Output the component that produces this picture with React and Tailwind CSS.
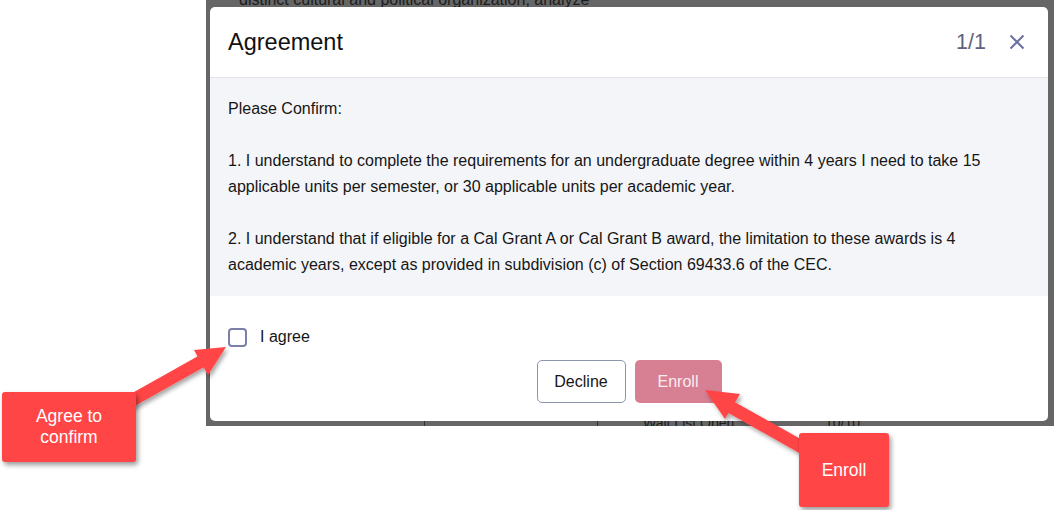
import React from "react";

const font = { fontFamily: '"Liberation Sans", Arial, sans-serif' };

const Callout = ({ className, children }) => (
  <div
    className={`absolute flex items-center justify-center text-center text-white bg-[#ff4545] rounded-[3px] shadow-[2px_3px_5px_rgba(0,0,0,0.4)] text-[17.5px] leading-[21px] ${className}`}
  >
    {children}
  </div>
);

const Arrows = () => (
  <svg
    className="absolute left-0 top-0 pointer-events-none"
    width="1054"
    height="510"
    viewBox="0 0 1054 510"
  >
    <defs>
      <filter id="sh" x="-20%" y="-20%" width="140%" height="140%">
        <feDropShadow dx="2" dy="3" stdDeviation="2" floodColor="#000" floodOpacity="0.35" />
      </filter>
    </defs>
    <g fill="#ff4545" stroke="none" filter="url(#sh)">
      {/* agree arrow */}
      <polygon points="118,401 200,355 206,366 124,412" />
      <polygon points="226,347 194,350 208,375" />
      {/* enroll arrow */}
      <polygon points="731,400 815,447 808,458 725,411" />
      <polygon points="705,390 740,394 725,419" />
    </g>
  </svg>
);

export default function App() {
  return (
    <div className="relative w-[1054px] h-[510px] bg-white overflow-hidden" style={font}>
      {/* dimmed page behind the dialog */}
      <div className="absolute left-[206px] top-0 w-[848px] h-[426px] bg-[#666666] overflow-hidden">
        <div className="absolute left-[33px] top-[-12px] text-[16px] text-[#1c1c1c] whitespace-nowrap">
          distinct cultural and political organization, analyze
        </div>
        <div className="absolute left-[218px] top-[410px] w-px h-[20px] bg-[#333]" />
        <div className="absolute left-[391px] top-[410px] w-px h-[20px] bg-[#333]" />
        <div className="absolute left-[437px] top-[413px] text-[14px] text-[#1c1c1c] whitespace-nowrap">
          Wait List Open
        </div>
        <div className="absolute left-[619px] top-[413px] text-[14px] text-[#1c1c1c] whitespace-nowrap">
          10/10
        </div>

        {/* dialog */}
        <div className="absolute left-[4px] top-[7px] w-[838px] h-[414px] bg-white rounded-[5px] flex flex-col">
          <div className="h-[71px] shrink-0 flex items-center px-[18px] border-b border-[#e3e5ea]">
            <h2 className="text-[23.5px] text-[#111] flex-1 pt-[2px]">Agreement</h2>
            <span className="text-[21.5px] text-[#5d627c] mr-[23px] pt-[1px]">1/1</span>
            <svg width="16" height="16" viewBox="0 0 16 16" className="mr-[5px]">
              <path d="M1.5 1.5 L14.5 14.5 M14.5 1.5 L1.5 14.5" stroke="#6b71a1" strokeWidth="2" fill="none" />
            </svg>
          </div>

          <div className="bg-[#f4f5f9] pl-[18px] pr-[30px] pt-[18px] pb-[18px] text-[16px] leading-[26px] text-[#161616]">
            <p>Please Confirm:</p>
            <p className="mt-[26px]">
              1. I understand to complete the requirements for an undergraduate degree within 4 years I need to take 15 applicable units per semester, or 30 applicable units per academic year.
            </p>
            <p className="mt-[26px]">
              2. I understand that if eligible for a Cal Grant A or Cal Grant B award, the limitation to these awards is 4 academic years, except as provided in subdivision (c) of Section 69433.6 of the CEC.
            </p>
          </div>

          <div className="flex-1 flex flex-col px-[18px] pt-[29px]">
            <label className="flex items-center gap-[13px] text-[16px] text-[#161616]">
              <span className="w-[19px] h-[19px] rounded-[4px] border-2 border-[#7c80a8] bg-white" />
              I agree
            </label>
            <div className="flex justify-center gap-[9px] mt-[11px]">
              <button className="h-[43px] w-[89px] rounded-[5px] border border-[#8d96ab] bg-white text-[16px] text-[#161616]">
                Decline
              </button>
              <button className="h-[43px] w-[87px] rounded-[5px] bg-[#d77f93] text-[16px] text-[#fbecef]">
                Enroll
              </button>
            </div>
          </div>
        </div>
      </div>

      <Arrows />

      <Callout className="left-[2px] top-[392px] w-[134px] h-[70px]">
        Agree to
        <br />
        confirm
      </Callout>
      <Callout className="left-[799px] top-[433px] w-[90px] h-[74px]">Enroll</Callout>
    </div>
  );
}
